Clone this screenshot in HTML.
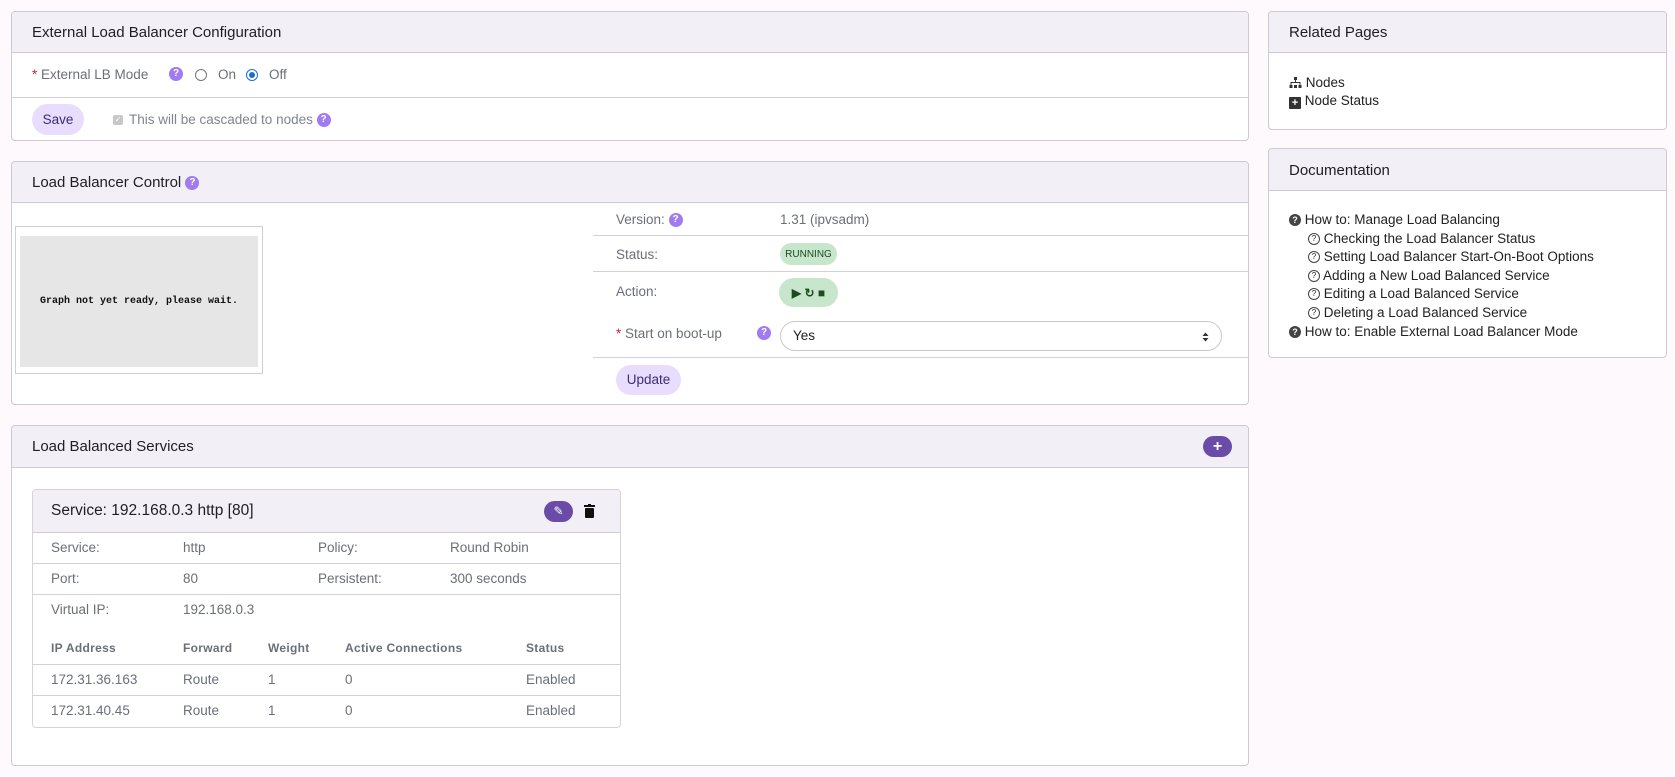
<!DOCTYPE html>
<html><head><meta charset="utf-8"><style>
*{box-sizing:border-box;margin:0;padding:0}
body{width:1675px;height:777px;background:#fdf9fd;font-family:"Liberation Sans",sans-serif;font-size:13.5px;color:#6b6f7a;position:relative;overflow:hidden}
.a{position:absolute}
.panel{position:absolute;background:#fff;border:1px solid #cfc9d3;border-radius:4px;overflow:hidden}
.hd{position:absolute;left:0;right:0;top:0;background:#f3eff6;border-bottom:1px solid #cfc9d3}
.ht{position:absolute;left:20px;color:#1e1e24;font-size:15px}
.line{position:absolute;height:1px;background:#d4d0d8}
.q{display:inline-block;width:14px;height:14px;border-radius:50%;background:#a07cf0;color:#fff;font-size:10px;font-weight:bold;text-align:center;line-height:14px;vertical-align:top;margin-top:1px}
.btn{position:absolute;background:#e9ddfd;color:#3d2a78;border-radius:16px;text-align:center;font-size:13.5px}
.oq{display:inline-block;width:12px;height:12px;border-radius:50%;border:1px solid #444;font-size:8px;text-align:center;line-height:10px;vertical-align:top;margin-top:3px}
.fq{display:inline-block;width:12px;height:12px;border-radius:50%;background:#444;color:#fff;font-size:9px;text-align:center;line-height:12px;font-weight:bold;vertical-align:top;margin-top:3px}
.pill{display:flex;align-items:center;justify-content:center}
</style></head><body>

<div class="panel" style="left:11px;top:11px;width:1238px;height:130px">
 <div class="hd" style="height:41px"><div class="ht" style="top:12px">External Load Balancer Configuration</div></div>
 <div class="a" style="left:20px;top:55px"><span style="color:#c0282f">*</span> External LB Mode</div>
 <div class="a" style="left:157px;top:55px"><span class="q" style="margin:0">?</span></div>
 <div class="a" style="left:183px;top:57px;width:12px;height:12px;border:1px solid #777;border-radius:50%"></div>
 <div class="a" style="left:206px;top:55px">On</div>
 <div class="a" style="left:234px;top:57px;width:12px;height:12px;border:1.5px solid #1a6bd8;border-radius:50%"><div class="a" style="left:2px;top:2px;width:6px;height:6px;background:#1a6bd8;border-radius:50%"></div></div>
 <div class="a" style="left:257px;top:55px">Off</div>
 <div class="line" style="left:0;right:0;top:85px"></div>
 <div class="btn" style="left:20px;top:92px;width:52px;height:31px;line-height:31px">Save</div>
 <div class="a" style="left:101px;top:103px;width:10px;height:10px;background:#c8c8c8;border-radius:2px;color:#fff;font-size:8px;line-height:10px;text-align:center">✓</div>
 <div class="a" style="left:117px;top:100px;color:#80848c">This will be cascaded to nodes <span class="q">?</span></div>
</div>

<div class="panel" style="left:11px;top:161px;width:1238px;height:244px">
 <div class="hd" style="height:41px"><div class="ht" style="top:12px">Load Balancer Control <span class="q" style="margin-top:2px">?</span></div></div>
 <div class="a" style="left:3px;top:64px;width:248px;height:148px;border:1px solid #d0d0d0;background:#fff">
  <div class="a" style="left:4px;top:9px;width:238px;height:131px;background:#e6e6e6;text-align:center;line-height:131px;font-family:'Liberation Mono',monospace;font-size:10px;font-weight:bold;color:#111">Graph not yet ready, please wait.</div>
 </div>
 <div class="a" style="left:604px;top:50px">Version: <span class="q">?</span></div>
 <div class="a" style="left:768px;top:50px">1.31 (ipvsadm)</div>
 <div class="line" style="left:581px;right:0;top:73px"></div>
 <div class="a" style="left:604px;top:85px">Status:</div>
 <div class="a pill" style="left:768px;top:81px;width:57px;height:22px;border-radius:11px;background:#c8e6cb;color:#1e4a22;font-size:10px">RUNNING</div>
 <div class="line" style="left:581px;right:0;top:109px"></div>
 <div class="a" style="left:604px;top:122px">Action:</div>
 <div class="a pill" style="left:767px;top:116px;width:59px;height:29px;border-radius:15px;background:#c8e6cb;color:#1d4d1f;font-size:12px;font-weight:bold">▶ ↻ ■</div>
 <div class="a" style="left:604px;top:164px"><span style="color:#c0282f">*</span> Start on boot-up</div>
 <div class="a" style="left:745px;top:164px"><span class="q" style="margin:0">?</span></div>
 <div class="a" style="left:768px;top:159px;width:442px;height:30px;border:1px solid #c9c9cc;border-radius:15px;color:#222;padding-left:12px;line-height:28px">Yes
  <svg class="a" style="right:12px;top:10px" width="7" height="10" viewBox="0 0 7 10"><path d="M0.5 4 L3.5 0.5 L6.5 4Z M0.5 6 L3.5 9.5 L6.5 6Z" fill="#333"/></svg></div>
 <div class="line" style="left:581px;right:0;top:195px"></div>
 <div class="btn" style="left:604px;top:203px;width:65px;height:30px;line-height:30px">Update</div>
</div>

<div class="panel" style="left:11px;top:425px;width:1238px;height:341px">
 <div class="hd" style="height:42px"><div class="ht" style="top:12px">Load Balanced Services</div>
  <div class="a" style="left:1191px;top:10px;width:29px;height:21px;background:#6a4ca8;border-radius:11px;color:#fff;text-align:center;font-weight:bold;font-size:16px;line-height:21px">+</div></div>
 <div class="a" style="left:20px;top:63px;width:589px;height:239px;border:1px solid #d6d2da;border-radius:4px;overflow:hidden;background:#fff">
  <div class="a" style="left:0;right:0;top:0;height:43px;background:#f3eff6;border-bottom:1px solid #d0ccd4"></div>
  <div class="a" style="left:18px;top:12px;font-size:15.5px;color:#1e1e24">Service: 192.168.0.3 http [80]</div>
  <div class="a" style="left:511px;top:11px;width:29px;height:21px;background:#6a4ca8;border-radius:11px;color:#fff;text-align:center;font-size:12px;line-height:21px">✎</div>
  <svg class="a" style="left:551px;top:14px" width="11" height="14" viewBox="0 0 11 14"><rect x="0" y="1" width="11" height="2" fill="#111"/><rect x="4" y="0" width="3" height="2" fill="#111"/><rect x="1" y="4" width="9" height="10" rx="1" fill="#111"/></svg>
  <div class="a" style="left:18px;top:50px">Service:</div><div class="a" style="left:150px;top:50px">http</div>
  <div class="a" style="left:285px;top:50px">Policy:</div><div class="a" style="left:417px;top:50px">Round Robin</div>
  <div class="line" style="left:0;right:0;top:73px"></div>
  <div class="a" style="left:18px;top:81px">Port:</div><div class="a" style="left:150px;top:81px">80</div>
  <div class="a" style="left:285px;top:81px">Persistent:</div><div class="a" style="left:417px;top:81px">300 seconds</div>
  <div class="line" style="left:0;right:0;top:104px"></div>
  <div class="a" style="left:18px;top:112px">Virtual IP:</div><div class="a" style="left:150px;top:112px">192.168.0.3</div>
  <div class="a" style="left:18px;top:151px;font-weight:bold;font-size:12px;letter-spacing:.3px">IP Address</div>
  <div class="a" style="left:150px;top:151px;font-weight:bold;font-size:12px;letter-spacing:.3px">Forward</div>
  <div class="a" style="left:235px;top:151px;font-weight:bold;font-size:12px;letter-spacing:.3px">Weight</div>
  <div class="a" style="left:312px;top:151px;font-weight:bold;font-size:12px;letter-spacing:.3px">Active Connections</div>
  <div class="a" style="left:493px;top:151px;font-weight:bold;font-size:12px;letter-spacing:.3px">Status</div>
  <div class="line" style="left:0;right:0;top:174px"></div>
  <div class="a" style="left:18px;top:182px">172.31.36.163</div><div class="a" style="left:150px;top:182px">Route</div><div class="a" style="left:235px;top:182px">1</div><div class="a" style="left:312px;top:182px">0</div><div class="a" style="left:493px;top:182px">Enabled</div>
  <div class="line" style="left:0;right:0;top:205px"></div>
  <div class="a" style="left:18px;top:213px">172.31.40.45</div><div class="a" style="left:150px;top:213px">Route</div><div class="a" style="left:235px;top:213px">1</div><div class="a" style="left:312px;top:213px">0</div><div class="a" style="left:493px;top:213px">Enabled</div>
 </div>
</div>

<div class="panel" style="left:1268px;top:11px;width:399px;height:119px">
 <div class="hd" style="height:41px"><div class="ht" style="top:12px">Related Pages</div></div>
 <div class="a" style="left:20px;top:63px;color:#222"><svg width="13" height="11" viewBox="0 0 13 11" style="vertical-align:-1px"><rect x="5" y="0" width="3" height="3" fill="#333"/><path d="M6.5 3V5M2 8V5.5H11V8" stroke="#333" fill="none"/><rect x="0.5" y="8" width="3" height="3" fill="#333"/><rect x="5" y="8" width="3" height="3" fill="#333"/><rect x="9.5" y="8" width="3" height="3" fill="#333"/></svg> Nodes</div>
 <div class="a" style="left:20px;top:81px;color:#222"><span style="display:inline-block;width:12px;height:12px;background:#333;color:#fff;font-size:11px;line-height:12px;text-align:center;font-weight:bold;border-radius:1px;vertical-align:-1px">+</span> Node Status</div>
</div>

<div class="panel" style="left:1268px;top:148px;width:399px;height:210px">
 <div class="hd" style="height:42px"><div class="ht" style="top:13px">Documentation</div></div>
 <div class="a" style="left:20px;top:62px;color:#222;line-height:18.6px">
  <div><span class="fq">?</span> How to: Manage Load Balancing</div>
  <div style="padding-left:19px"><span class="oq">?</span> Checking the Load Balancer Status</div>
  <div style="padding-left:19px"><span class="oq">?</span> Setting Load Balancer Start-On-Boot Options</div>
  <div style="padding-left:19px"><span class="oq">?</span> Adding a New Load Balanced Service</div>
  <div style="padding-left:19px"><span class="oq">?</span> Editing a Load Balanced Service</div>
  <div style="padding-left:19px"><span class="oq">?</span> Deleting a Load Balanced Service</div>
  <div><span class="fq">?</span> How to: Enable External Load Balancer Mode</div>
 </div>
</div>
</body></html>
